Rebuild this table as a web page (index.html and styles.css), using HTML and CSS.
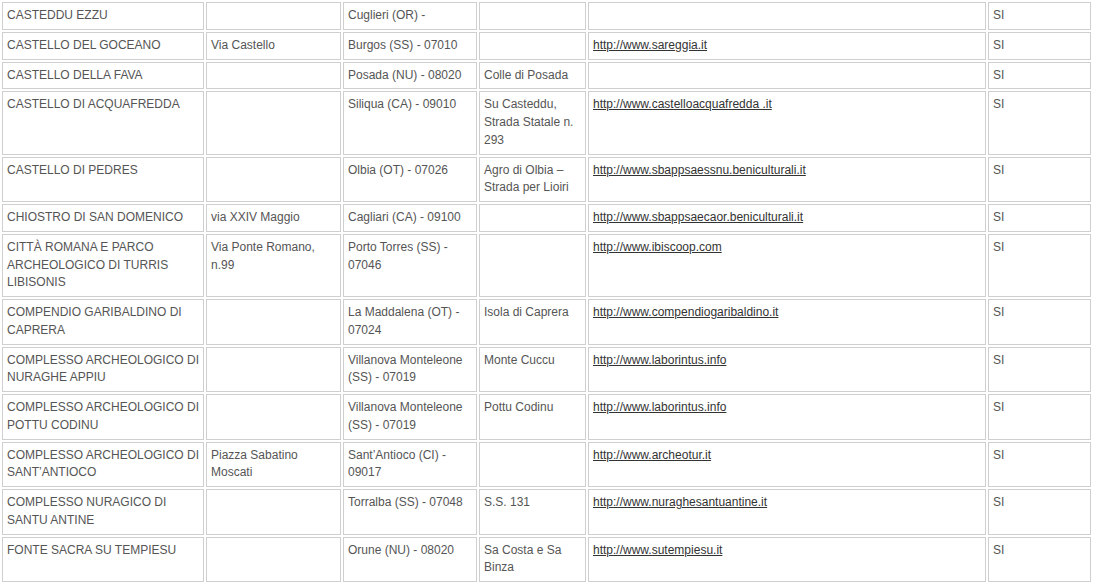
FILE: index.html
```html
<!DOCTYPE html>
<html lang="it">
<head>
<meta charset="utf-8">
<title>Siti</title>
<link rel="stylesheet" href="styles.css">
</head>
<body>
<table class="sites">
<tbody>
<tr><td>CASTEDDU EZZU</td><td></td><td>Cuglieri (OR) -</td><td></td><td></td><td>SI</td></tr>
<tr><td>CASTELLO DEL GOCEANO</td><td>Via Castello</td><td>Burgos (SS) - 07010</td><td></td><td><a href="#">http://www.sareggia.it</a></td><td>SI</td></tr>
<tr><td>CASTELLO DELLA FAVA</td><td></td><td>Posada (NU) - 08020</td><td>Colle di Posada</td><td></td><td>SI</td></tr>
<tr><td>CASTELLO DI ACQUAFREDDA</td><td></td><td>Siliqua (CA) - 09010</td><td>Su Casteddu, Strada Statale n. 293</td><td><a href="#">http://www.castelloacquafredda .it</a></td><td>SI</td></tr>
<tr><td>CASTELLO DI PEDRES</td><td></td><td>Olbia (OT) - 07026</td><td>Agro di Olbia – Strada per Lioiri</td><td><a href="#">http://www.sbappsaessnu.beniculturali.it</a></td><td>SI</td></tr>
<tr><td>CHIOSTRO DI SAN DOMENICO</td><td>via XXIV Maggio</td><td>Cagliari (CA) - 09100</td><td></td><td><a href="#">http://www.sbappsaecaor.beniculturali.it</a></td><td>SI</td></tr>
<tr><td>CITTÀ ROMANA E PARCO ARCHEOLOGICO DI TURRIS LIBISONIS</td><td>Via Ponte Romano, n.99</td><td>Porto Torres (SS) - 07046</td><td></td><td><a href="#">http://www.ibiscoop.com</a></td><td>SI</td></tr>
<tr><td>COMPENDIO GARIBALDINO DI CAPRERA</td><td></td><td>La Maddalena (OT) - 07024</td><td>Isola di Caprera</td><td><a href="#">http://www.compendiogaribaldino.it</a></td><td>SI</td></tr>
<tr><td>COMPLESSO ARCHEOLOGICO DI NURAGHE APPIU</td><td></td><td>Villanova Monteleone (SS) - 07019</td><td>Monte Cuccu</td><td><a href="#">http://www.laborintus.info</a></td><td>SI</td></tr>
<tr><td>COMPLESSO ARCHEOLOGICO DI POTTU CODINU</td><td></td><td>Villanova Monteleone (SS) - 07019</td><td>Pottu Codinu</td><td><a href="#">http://www.laborintus.info</a></td><td>SI</td></tr>
<tr><td>COMPLESSO ARCHEOLOGICO DI SANT’ANTIOCO</td><td>Piazza Sabatino Moscati</td><td>Sant’Antioco (CI) - 09017</td><td></td><td><a href="#">http://www.archeotur.it</a></td><td>SI</td></tr>
<tr><td>COMPLESSO NURAGICO DI SANTU ANTINE</td><td></td><td>Torralba (SS) - 07048</td><td>S.S. 131</td><td><a href="#">http://www.nuraghesantuantine.it</a></td><td>SI</td></tr>
<tr><td>FONTE SACRA SU TEMPIESU</td><td></td><td>Orune (NU) - 08020</td><td>Sa Costa e Sa Binza</td><td><a href="#">http://www.sutempiesu.it</a></td><td>SI</td></tr>
</tbody>
</table>
</body>
</html>
```
FILE: styles.css
```css
html, body {
  margin: 0;
  padding: 0;
  background: #fff;
}

body {
  font-family: "Liberation Sans", Arial, sans-serif;
  font-size: 12px;
  color: #555;
}

.sites {
  width: 1093px;
  table-layout: fixed;
  border-collapse: separate;
  border-spacing: 2px;
}

.sites td {
  box-sizing: border-box;
  border: 1px solid #cfcfcf;
  padding: 4px 2px 4px 4px;
  vertical-align: top;
  line-height: 17.75px;
  text-align: left;
}

.sites td:nth-child(1) { width: 202px; }
.sites td:nth-child(2) { width: 135px; }
.sites td:nth-child(3) { width: 134px; }
.sites td:nth-child(4) { width: 107px; }
.sites td:nth-child(5) { width: 398px; }
.sites td:nth-child(6) { width: 103px; }

.sites a {
  color: #333;
  text-decoration: underline;
}
```
